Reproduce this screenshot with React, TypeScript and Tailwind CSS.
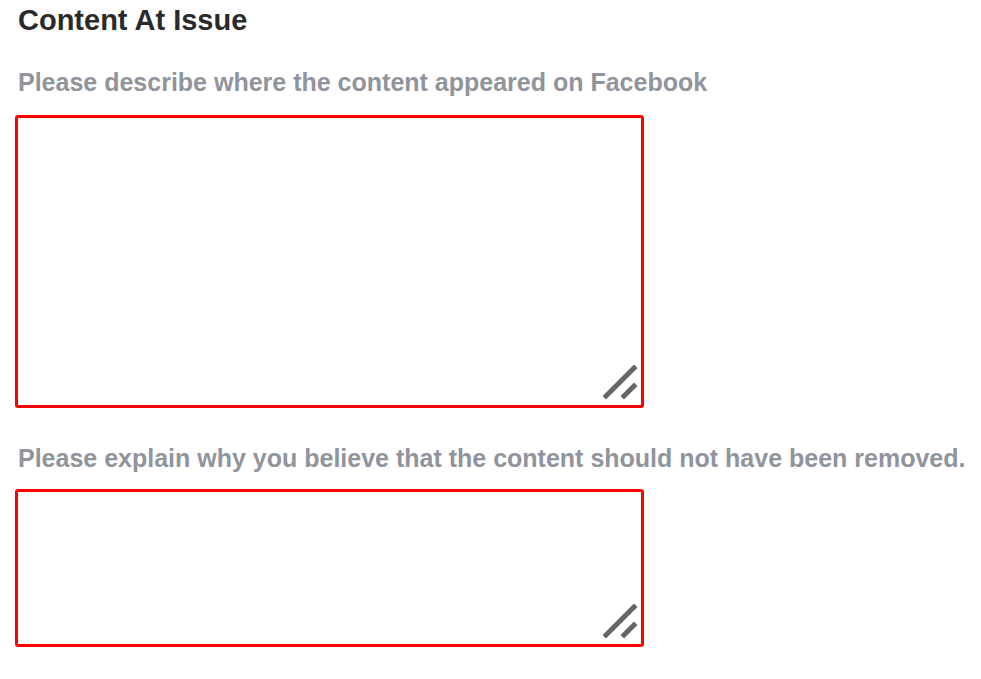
function Grip() {
  return (
    <svg
      className="absolute right-[5px] bottom-[7px] pointer-events-none"
      width="36"
      height="36"
      viewBox="0 0 36 36"
    >
      <line x1="3" y1="31" x2="31" y2="3" stroke="#666" strokeWidth="5" strokeLinecap="square" />
      <line x1="21" y1="31" x2="31" y2="21" stroke="#666" strokeWidth="5" strokeLinecap="square" />
    </svg>
  );
}

function Field({ label, height, gap }: { label: string; height: string; gap: string }) {
  return (
    <div className="flex flex-col">
      <label className="pl-[3px] text-[25px] font-bold text-[#90949c] leading-[28px]">{label}</label>
      <div className={`relative w-[629px] ${gap} ${height}`}>
        <textarea className="w-full h-full border-[3px] border-[#ff0000] rounded-[3px] resize-none outline-none block bg-white" />
        <Grip />
      </div>
    </div>
  );
}

export default function App() {
  return (
    <div className="min-h-screen bg-white px-[15px] pt-[4px]" style={{ fontFamily: '"Liberation Sans", Arial, sans-serif' }}>
      <h2 className="text-[29px] font-bold text-[#2a2a2a] leading-[32px] pl-[3px]">Content At Issue</h2>
      <div className="mt-[32px] flex flex-col gap-[36px]">
        <Field label="Please describe where the content appeared on Facebook" height="h-[293px]" gap="mt-[19px]" />
        <Field label="Please explain why you believe that the content should not have been removed." height="h-[158px]" gap="mt-[17px]" />
      </div>
    </div>
  );
}
